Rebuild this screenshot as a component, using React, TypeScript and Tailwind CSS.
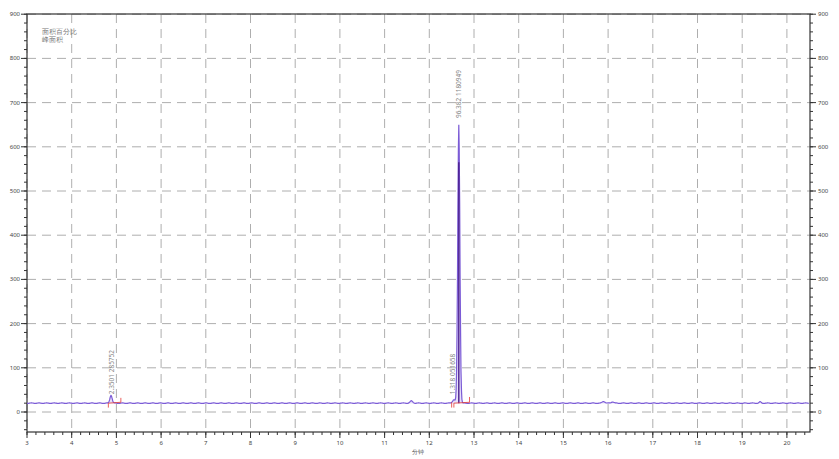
export default function App() {
  const L = 27, R = 810, T = 14, B = 432;
  const xs = (m: number) => L + (m - 3) * 44.7;
  const ys = (v: number) => 412 - v * 0.442;
  const yTicks = [0, 100, 200, 300, 400, 500, 600, 700, 800, 900];
  const xTicks = Array.from({ length: 18 }, (_, i) => i + 3);
  const minor: number[] = [];
  for (let v = -40; v <= 900; v += 20) minor.push(v);
  const xMinor: number[] = [];
  for (let m = 3; m <= 20.5; m += 0.2) xMinor.push(m);
  const base = 20;
  const pts: [number, number][] = [];
  for (let m = 3; m <= 20.5; m += 0.01) {
    let v = base + Math.sin(m * 37) * 0.6;
    const g = (c: number, w: number, h: number) => h * Math.exp(-((m - c) ** 2) / (2 * w * w));
    v += g(4.88, 0.025, 18) + g(11.6, 0.03, 5) + g(12.55, 0.03, 8) + g(12.66, 0.024, 630) + g(15.9, 0.03, 4) + g(16.1, 0.03, 3) + g(19.4, 0.02, 3);
    pts.push([xs(m), ys(v)]);
  }
  const d = pts.map((p, i) => (i ? "L" : "M") + p[0].toFixed(1) + " " + p[1].toFixed(1)).join(" ");
  return (
    <div className="w-[839px] h-[459px] bg-white font-['Liberation_Sans','Noto_Sans_CJK_SC',sans-serif]">
      <svg width="839" height="459" viewBox="0 0 839 459">
        {yTicks.map((v) => (
          <line key={"gy" + v} x1={L} x2={R} y1={ys(v)} y2={ys(v)} stroke="#999" strokeDasharray="9 6" strokeWidth="0.8" />
        ))}
        {xTicks.map((m) => (
          <line key={"gx" + m} x1={xs(m)} x2={xs(m)} y1={T} y2={B} stroke="#999" strokeDasharray="9 6" strokeWidth="0.8" />
        ))}
        <rect x={L} y={T} width={R - L} height={B - T} fill="none" stroke="#333" strokeWidth="1.2" />
        {minor.map((v) => (
          <g key={"m" + v}>
            <line x1={L - 3} x2={L} y1={ys(v)} y2={ys(v)} stroke="#333" />
            <line x1={R} x2={R + 3} y1={ys(v)} y2={ys(v)} stroke="#333" />
          </g>
        ))}
        {yTicks.map((v) => (
          <g key={"ly" + v} fontSize="6" fill="#444">
            <line x1={L - 6} x2={L} y1={ys(v)} y2={ys(v)} stroke="#333" />
            <line x1={R} x2={R + 6} y1={ys(v)} y2={ys(v)} stroke="#333" />
            <text x={L - 7} y={ys(v) + 2} textAnchor="end">{v}</text>
            <text x={R + 8} y={ys(v) + 2}>{v}</text>
          </g>
        ))}
        {xMinor.map((m, i) => (
          <line key={"xm" + i} x1={xs(m)} x2={xs(m)} y1={B} y2={B + 3} stroke="#333" />
        ))}
        {xTicks.map((m) => (
          <g key={"lx" + m}>
            <line x1={xs(m)} x2={xs(m)} y1={B} y2={B + 6} stroke="#333" />
            <text x={xs(m)} y={B + 13} fontSize="6" fill="#444" textAnchor="middle">{m}</text>
          </g>
        ))}
        <text x="418" y="454" fontSize="6" fill="#555" textAnchor="middle">分钟</text>
        <text x="42" y="34" fontSize="7" fill="#777">面积百分比</text>
        <text x="42" y="42" fontSize="7" fill="#777">峰面积</text>
        <path d={d} fill="#b9a8ef" fillOpacity="0.35" stroke="#7b5bd6" strokeWidth="1.2" />
        <line x1={xs(12.66)} x2={xs(12.66)} y1={ys(20)} y2={ys(565)} stroke="#4b1f8f" strokeWidth="1.4" />
        <g stroke="#e53935" strokeWidth="0.8" fill="none">
          <path d={`M${xs(4.82)} ${ys(10)} L${xs(4.82)} ${ys(20)} L${xs(5.1)} ${ys(22)} L${xs(5.1)} ${ys(32)}`} />
          <path d={`M${xs(12.5)} ${ys(10)} L${xs(12.5)} ${ys(22)} M${xs(12.55)} ${ys(10)} L${xs(12.55)} ${ys(20)} L${xs(12.9)} ${ys(22)} L${xs(12.9)} ${ys(34)}`} />
        </g>
        <g fontSize="6.5" fill="#888">
          <text transform={`translate(${xs(4.9) + 2} ${ys(40)}) rotate(-90)`}>2.3501 285752</text>
          <text transform={`translate(${xs(12.6) - 1} ${ys(40)}) rotate(-90)`}>1.318 051658</text>
          <text transform={`translate(${xs(12.66) + 2} ${ys(665)}) rotate(-90)`}>96.382 1180949</text>
        </g>
      </svg>
    </div>
  );
}
